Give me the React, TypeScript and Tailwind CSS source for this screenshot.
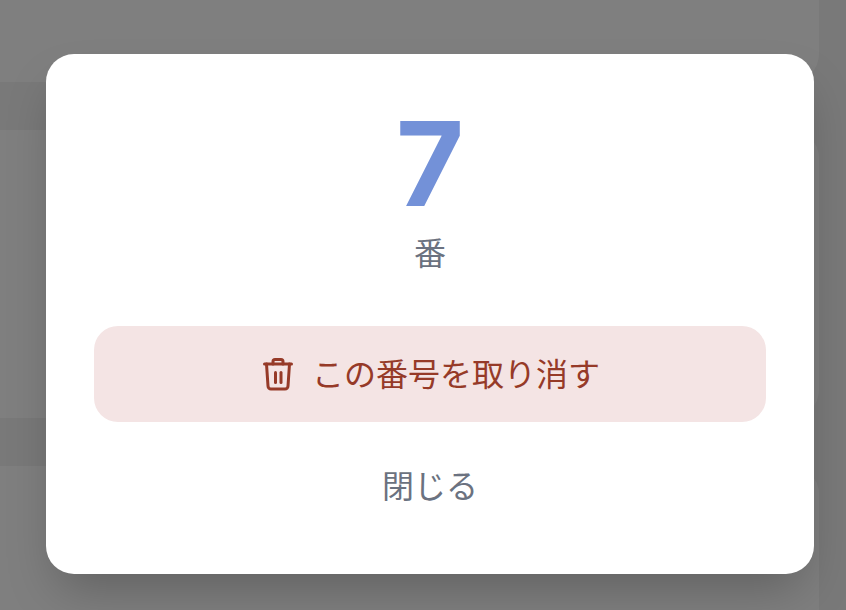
export default function App() {
  return (
    <div className="relative h-[610px] w-[846px] overflow-hidden bg-[#f2f2f2] font-['Noto_Sans_CJK_JP','Noto_Sans',sans-serif]">
      <div className="flex h-full w-[819px] flex-col gap-[48px]">
        <div className="h-[82px] shrink-0 rounded-br-[28px] bg-white" />
        <div className="h-[288px] shrink-0 rounded-r-[28px] bg-white" />
        <div className="h-[144px] shrink-0 rounded-tr-[28px] bg-white" />
      </div>
      <div className="absolute inset-0 flex items-center justify-center bg-black/50 pl-[14px] pt-[18px]">
        <div className="flex h-[520px] w-[768px] flex-col items-center rounded-[28px] bg-white px-12 pt-[50px] shadow-2xl">
          <div className="h-[120px] font-['Inter',sans-serif] text-[117px] font-bold leading-[120px] text-[#7391d8]">7</div>
          <div className="mt-[3px] text-[32px] leading-[48px] text-[#6b7280]">番</div>
          <button className="mt-[51px] flex h-[96px] w-full shrink-0 items-center justify-center gap-4 rounded-[24px] bg-[#f4e4e4] text-[32px] text-[#963a28]">
            <svg width="36" height="36" viewBox="0 0 36 36" fill="none" stroke="currentColor" strokeWidth="3" strokeLinecap="round" strokeLinejoin="round">
              <path d="M4.5 8h27" />
              <path d="M6.5 8l1.5 22a3 3 0 0 0 3 3h14a3 3 0 0 0 3-3l1.500-22" />
              <path d="M13 8V5.500a2 2 0 0 1 2-2h6a2 2 0 0 1 2 2V8" />
              <path d="M15.500 16.500v10" />
              <path d="M21 16.500v10" />
            </svg>
            <span className="pb-[5px]">この番号を取り消す</span>
          </button>
          <button className="mt-[16px] h-[96px] w-full pb-[4px] text-[32px] text-[#6b7280]">閉じる</button>
        </div>
      </div>
    </div>
  );
}
